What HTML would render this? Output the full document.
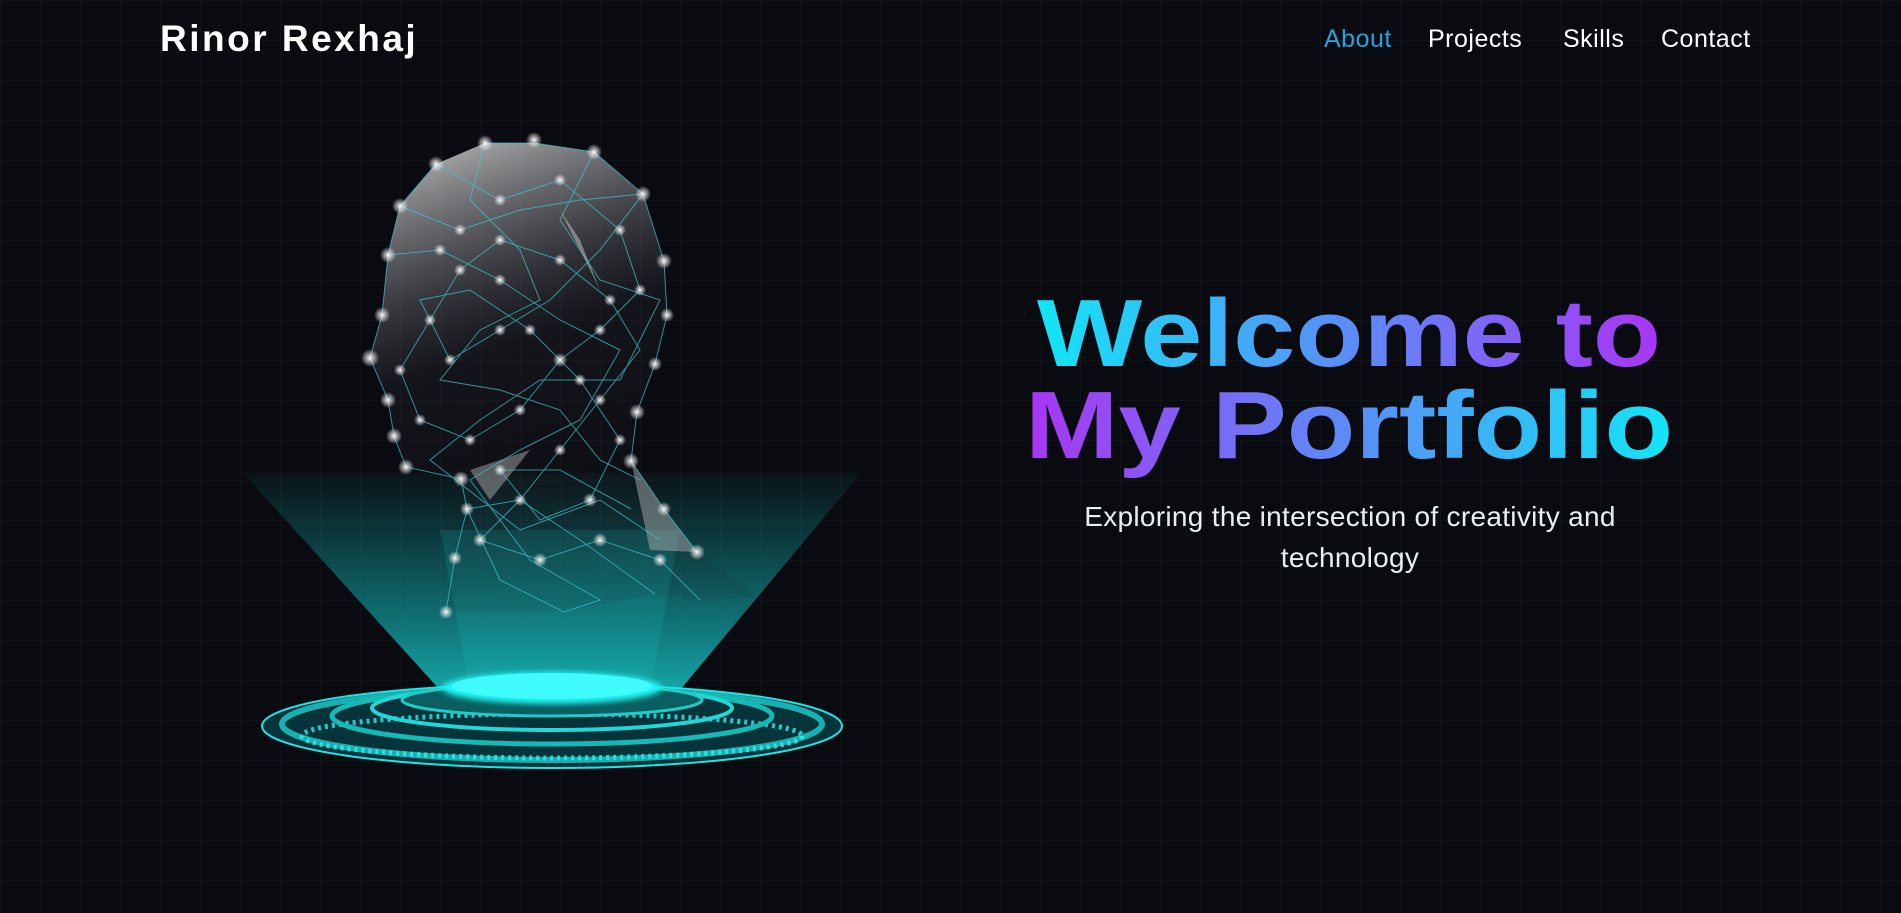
<!DOCTYPE html>
<html><head><meta charset="utf-8"><style>
html,body{margin:0;padding:0;width:1901px;height:913px;overflow:hidden;background:#0a0b10;font-family:"Liberation Sans",sans-serif;}
body{background-color:#0a0b10;background-image:linear-gradient(rgba(120,160,180,0.045) 1px,transparent 1px),linear-gradient(90deg,rgba(120,160,180,0.045) 1px,transparent 1px);background-size:40px 40px;position:relative;}
.logo{position:absolute;left:160px;top:18px;color:#fff;font-size:37px;font-weight:bold;letter-spacing:2.5px;}
.nav{position:absolute;top:25px;font-size:25px;color:#fff;letter-spacing:0.5px;}
.sub{position:absolute;left:1000px;width:700px;top:496px;text-align:center;color:#e6f0f5;font-size:28px;line-height:41px;letter-spacing:0.3px;}
svg{position:absolute;left:0;top:0;}
</style></head><body>
<div class="logo">Rinor Rexhaj</div>
<div class="nav" style="left:1324px;color:#2a9fe0">About</div>
<div class="nav" style="left:1428px">Projects</div>
<div class="nav" style="left:1563px">Skills</div>
<div class="nav" style="left:1661px">Contact</div>

<svg width="1901" height="913" viewBox="0 0 1901 913">
<defs>
<linearGradient id="g1" x1="1037" y1="0" x2="1661" y2="0" gradientUnits="userSpaceOnUse"><stop offset="0" stop-color="#12e6f7"/><stop offset="0.5" stop-color="#5b8cf7"/><stop offset="1" stop-color="#a935f5"/></linearGradient>
<linearGradient id="g2" x1="1025" y1="0" x2="1673" y2="0" gradientUnits="userSpaceOnUse"><stop offset="0" stop-color="#a935f5"/><stop offset="0.5" stop-color="#5b8cf7"/><stop offset="1" stop-color="#12e6f7"/></linearGradient>
<linearGradient id="beam" x1="0" y1="473" x2="0" y2="690" gradientUnits="userSpaceOnUse"><stop offset="0" stop-color="#0fb5b5" stop-opacity="0.05"/><stop offset="1" stop-color="#1ad8d8" stop-opacity="0.75"/></linearGradient>
<linearGradient id="head" x1="0" y1="0" x2="0.3" y2="1"><stop offset="0" stop-color="#e0e0e0" stop-opacity="0.9"/><stop offset="0.25" stop-color="#8a8a8e" stop-opacity="0.6"/><stop offset="0.5" stop-color="#2a2c32" stop-opacity="0.3"/><stop offset="1" stop-color="#1a1c22" stop-opacity="0.1"/></linearGradient>
<radialGradient id="dot"><stop offset="0" stop-color="#fff"/><stop offset="0.35" stop-color="#e8e8e8" stop-opacity="0.7"/><stop offset="1" stop-color="#fff" stop-opacity="0"/></radialGradient>
<filter id="bl"><feGaussianBlur stdDeviation="3"/></filter>
</defs>
<text x="1037" y="366" font-family="Liberation Sans" font-weight="bold" font-size="96" fill="url(#g1)" textLength="624" lengthAdjust="spacingAndGlyphs">Welcome to</text>
<text x="1025" y="458" font-family="Liberation Sans" font-weight="bold" font-size="96" fill="url(#g2)" textLength="648" lengthAdjust="spacingAndGlyphs">My Portfolio</text>

<polygon points="243,473 861,473 680,690 440,690" fill="url(#beam)"/>
<polygon points="440,530 680,530 650,690 470,690" fill="#1ad0d0" opacity="0.15"/>
<path d="M534,143 L594,152 L643,194 L664,261 L667,315 L655,364 L637,412 L631,461 L631,509 L664,509 L697,552 L758,597 L703,600 L655,594 L564,612 L446,612 L455,558 L467,509 L461,479 L406,467 L394,436 L388,400 L370,358 L382,315 L388,255 L400,206 L436,164 L485,143 Z" fill="url(#head)"/>
<polygon points="560,210 600,290 580,240" fill="#ccc" opacity="0.5"/>
<polygon points="470,470 530,450 490,500" fill="#ccc" opacity="0.4"/>
<polygon points="631,461 664,509 697,552 650,550" fill="#bbb" opacity="0.45"/>
<g stroke="#3fc7d6" stroke-width="1" opacity="0.7" fill="none">
<polyline points="485,143 534,143 594,152 643,194 664,261 667,315 655,364 637,412 631,461 664,509 697,552"/>
<polyline points="436,164 400,206 388,255 382,315 370,358 388,400 394,436 406,467 461,479 467,509 455,558 446,612"/>
<polyline points="436,164 500,200 560,180 620,230 640,290 600,330 560,360 520,410 470,440 420,420 400,370 430,320 460,270 500,240 560,260 610,300 640,350 600,400 560,450 520,500 480,540 540,560 600,540 660,560 700,600"/>
<polyline points="400,206 460,230 520,210 580,200 643,194 600,250 550,300 500,330 450,360 420,300 470,290 530,330 580,380 620,440 590,500 540,520 500,470 560,470 631,509"/>
<polyline points="388,255 440,250 500,280 560,320 620,350 580,420 520,450 470,480 530,560 600,600 564,612 500,580 467,509 520,500 580,540 655,594"/>
<polyline points="485,143 470,200 520,250 540,300 480,330 440,380 500,390 560,410 600,460 640,480"/>
<polyline points="594,152 560,220 600,280 660,300 620,380 540,380 480,420 430,460 520,530 600,500 660,540"/>
</g>
<g fill="url(#dot)">
<circle cx="485" cy="143" r="8"/><circle cx="534" cy="140" r="8"/><circle cx="594" cy="152" r="8"/><circle cx="643" cy="194" r="8"/><circle cx="664" cy="261" r="8"/><circle cx="667" cy="315" r="7"/><circle cx="655" cy="364" r="7"/><circle cx="637" cy="412" r="8"/><circle cx="631" cy="461" r="8"/><circle cx="664" cy="509" r="7"/><circle cx="697" cy="552" r="8"/>
<circle cx="436" cy="164" r="8"/><circle cx="400" cy="206" r="8"/><circle cx="388" cy="255" r="8"/><circle cx="382" cy="315" r="8"/><circle cx="370" cy="358" r="9"/><circle cx="388" cy="400" r="8"/><circle cx="394" cy="436" r="8"/><circle cx="406" cy="467" r="8"/><circle cx="461" cy="479" r="8"/><circle cx="467" cy="509" r="7"/><circle cx="455" cy="558" r="7"/><circle cx="446" cy="612" r="7"/>
<circle cx="500" cy="200" r="6"/><circle cx="560" cy="180" r="6"/><circle cx="620" cy="230" r="6"/><circle cx="640" cy="290" r="6"/><circle cx="600" cy="330" r="6"/><circle cx="560" cy="360" r="7"/><circle cx="520" cy="410" r="6"/><circle cx="470" cy="440" r="6"/><circle cx="420" cy="420" r="6"/><circle cx="400" cy="370" r="6"/><circle cx="430" cy="320" r="6"/><circle cx="460" cy="270" r="6"/><circle cx="500" cy="240" r="6"/><circle cx="560" cy="260" r="6"/><circle cx="610" cy="300" r="6"/><circle cx="600" cy="400" r="6"/><circle cx="560" cy="450" r="6"/><circle cx="520" cy="500" r="6"/><circle cx="480" cy="540" r="7"/><circle cx="540" cy="560" r="7"/><circle cx="600" cy="540" r="7"/><circle cx="660" cy="560" r="7"/><circle cx="460" cy="230" r="6"/><circle cx="580" cy="380" r="6"/><circle cx="500" cy="330" r="6"/><circle cx="450" cy="360" r="6"/><circle cx="530" cy="330" r="6"/><circle cx="620" cy="440" r="6"/><circle cx="590" cy="500" r="7"/><circle cx="500" cy="470" r="6"/><circle cx="440" cy="250" r="6"/><circle cx="500" cy="280" r="6"/>
</g>
<ellipse cx="552" cy="726" rx="290" ry="42" fill="#07343a" stroke="#1ee6e6" stroke-width="2"/>
<ellipse cx="552" cy="724" rx="270" ry="36" fill="none" stroke="#1dcfcf" stroke-width="6" opacity="0.8"/>
<ellipse cx="552" cy="736" rx="250" ry="22" fill="none" stroke="#2ff0f0" stroke-width="5" stroke-dasharray="3 4" opacity="0.8"/>
<ellipse cx="552" cy="716" rx="220" ry="28" fill="none" stroke="#16b8b8" stroke-width="5"/>
<ellipse cx="552" cy="708" rx="180" ry="22" fill="none" stroke="#20d8d8" stroke-width="4"/>
<ellipse cx="552" cy="700" rx="150" ry="16" fill="#0a6060" stroke="#1ecccc" stroke-width="3"/>
<ellipse cx="552" cy="688" rx="110" ry="16" fill="#22f5f5" filter="url(#bl)"/>
<ellipse cx="552" cy="686" rx="100" ry="13" fill="#3ffbfb"/>
</svg>

<div class="sub">Exploring the intersection of creativity and<br>technology</div>
</body></html>
